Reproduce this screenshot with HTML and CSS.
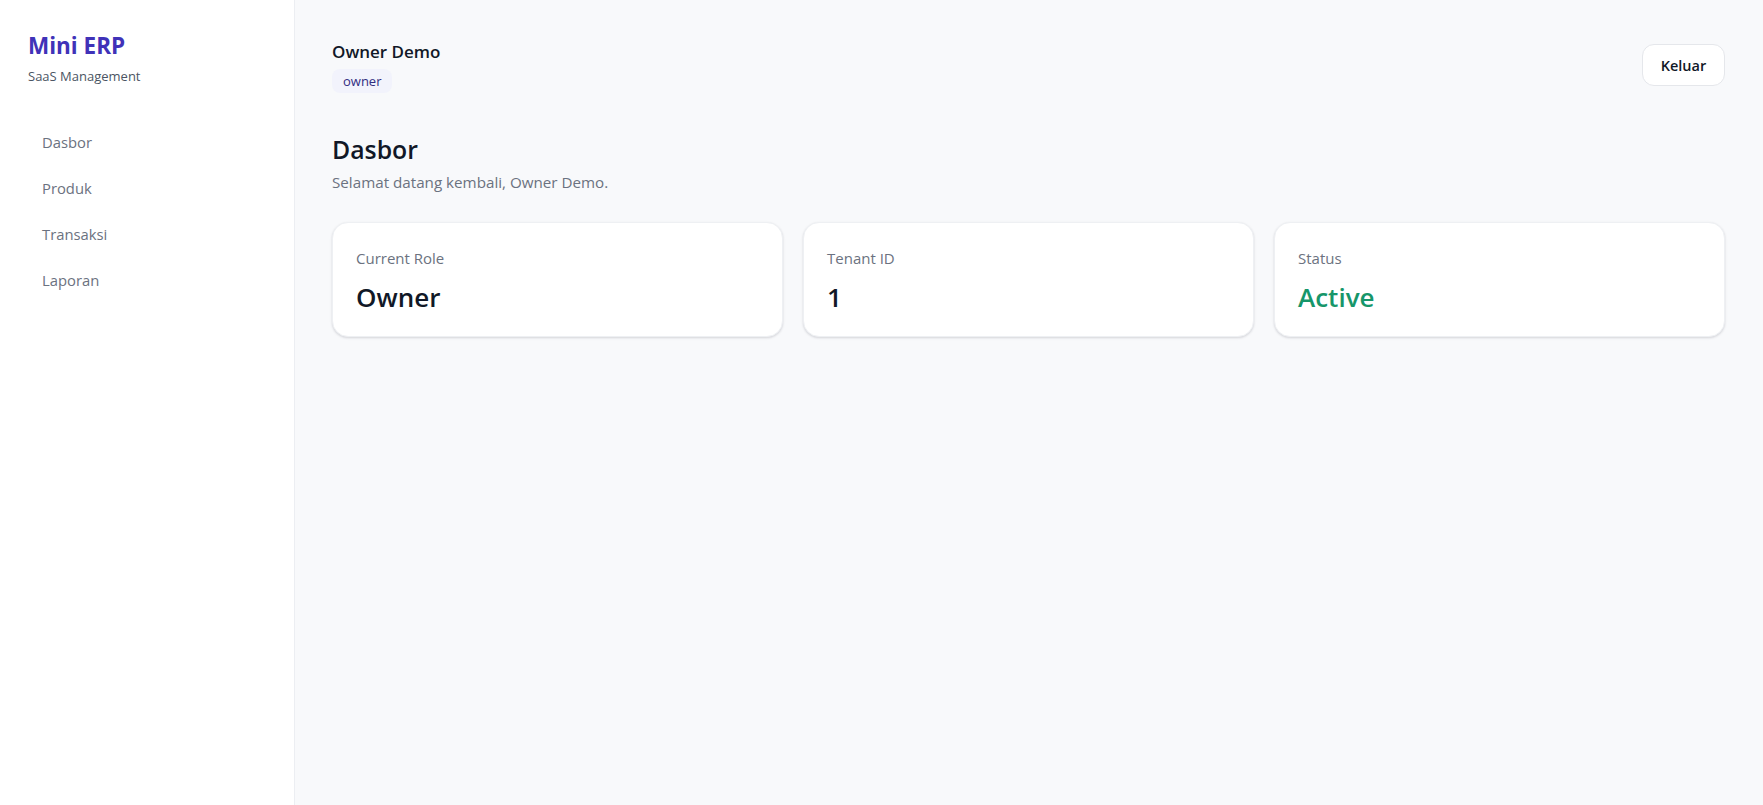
FILE: index.html
```html
<!DOCTYPE html>
<html lang="id">
<head>
<meta charset="utf-8">
<title>Mini ERP - Dasbor</title>
<link rel="stylesheet" href="styles.css">
</head>
<body>
<div class="layout">
  <aside class="sidebar">
    <div class="brand">
      <div class="brand-name">Mini ERP</div>
      <div class="brand-sub">SaaS Management</div>
    </div>
    <nav class="nav">
      <a class="nav-link" href="#">Dasbor</a>
      <a class="nav-link" href="#">Produk</a>
      <a class="nav-link" href="#">Transaksi</a>
      <a class="nav-link" href="#">Laporan</a>
    </nav>
  </aside>
  <main class="main">
    <header class="topbar">
      <div class="user">
        <div class="user-name">Owner Demo</div>
        <span class="role-badge">owner</span>
      </div>
      <button class="btn-logout" type="button">Keluar</button>
    </header>
    <section class="page-head">
      <h1 class="page-title">Dasbor</h1>
      <p class="page-sub">Selamat datang kembali, Owner Demo.</p>
    </section>
    <section class="stats">
      <div class="card">
        <div class="card-label">Current Role</div>
        <div class="card-value">Owner</div>
      </div>
      <div class="card">
        <div class="card-label">Tenant ID</div>
        <div class="card-value">1</div>
      </div>
      <div class="card">
        <div class="card-label">Status</div>
        <div class="card-value card-value--ok">Active</div>
      </div>
    </section>
  </main>
</div>
</body>
</html>
```
FILE: styles.css
```css
* { box-sizing: border-box; }

html, body {
  margin: 0;
  height: 100%;
}

body {
  font-family: "Open Sans", "Noto Sans", sans-serif;
  color: #111827;
  background: #f8f9fb;
}

.layout {
  display: flex;
  min-height: 100vh;
}

/* Sidebar */
.sidebar {
  width: 295px;
  flex-shrink: 0;
  background: #ffffff;
  border-right: 1px solid #eceef2;
  padding: 32px 28px;
}

.brand-name {
  font-size: 22.5px;
  font-weight: 700;
  line-height: 28px;
  color: #4032b8;
}

.brand-sub {
  font-size: 13px;
  line-height: 20px;
  color: #4b5563;
  margin-top: 6px;
}

.nav {
  display: flex;
  flex-direction: column;
  margin-top: 33px;
}

.nav-link {
  display: block;
  padding: 0 14px;
  height: 46px;
  line-height: 46px;
  font-size: 14.8px;
  color: #6b7280;
  text-decoration: none;
}

/* Main area */
.main {
  flex: 1;
  padding: 40px 38px 38px 37px;
}

.topbar {
  display: flex;
  justify-content: space-between;
  align-items: flex-start;
}

.user-name {
  font-size: 17px;
  font-weight: 600;
  line-height: 24px;
  color: #111827;
}

.role-badge {
  display: inline-block;
  margin-top: 5px;
  padding: 0 11px;
  height: 24px;
  line-height: 24px;
  border-radius: 8px;
  background: #f2f3fc;
  color: #312e81;
  font-size: 13px;
}

.btn-logout {
  margin-top: 4px;
  width: 83px;
  height: 42px;
  background: #ffffff;
  border: 1px solid #e5e7eb;
  border-radius: 12px;
  font-family: inherit;
  font-size: 14.5px;
  font-weight: 600;
  color: #111827;
  cursor: pointer;
}

.page-head {
  margin-top: 40px;
}

.page-title {
  margin: 0;
  font-size: 24.8px;
  font-weight: 600;
  line-height: 32px;
  color: #111827;
}

.page-sub {
  margin: 6px 0 0;
  font-size: 15.2px;
  line-height: 22px;
  color: #6b7280;
}

.stats {
  display: grid;
  grid-template-columns: repeat(3, 1fr);
  gap: 20px;
  margin-top: 29px;
}

.card {
  background: #ffffff;
  border: 1px solid #eef0f3;
  border-radius: 16px;
  box-shadow: 0 1px 3px rgba(17, 24, 39, 0.10), 0 1px 2px rgba(17, 24, 39, 0.06);
  padding: 25px 23px 18px;
  height: 115px;
}

.card-label {
  font-size: 15px;
  line-height: 20px;
  color: #6b7280;
}

.card-value {
  margin-top: 13px;
  font-size: 26px;
  font-weight: 600;
  line-height: 32px;
  color: #111827;
}

.card-value--ok {
  color: #16966a;
}
```
